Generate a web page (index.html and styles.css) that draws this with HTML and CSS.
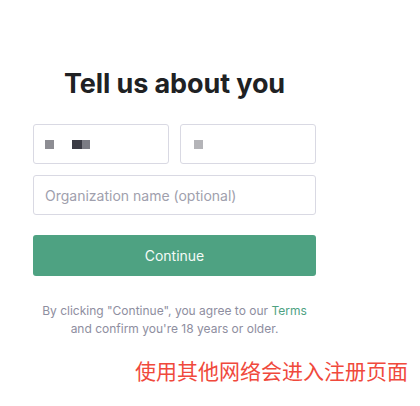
FILE: index.html
```html
<!DOCTYPE html>
<html>
<head>
<meta charset="utf-8">
<link rel="stylesheet" href="styles.css">
</head>
<body>
<main class="page">
  <section class="card">
    <h1 class="title">Tell us about you</h1>
    <div class="row">
      <div class="field">
        <span class="blot blot-light"></span>
        <span class="blot blot-dark"></span><span class="blot blot-mid"></span>
      </div>
      <div class="field">
        <span class="blot blot-faint"></span>
      </div>
    </div>
    <div class="field field-wide">
      <span class="placeholder">Organization name (optional)</span>
    </div>
    <button class="continue">Continue</button>
    <p class="legal">By clicking "Continue", you agree to our <span class="terms">Terms</span><br>and confirm you're 18 years or older.</p>
  </section>
  <p class="note">使用其他网络会进入注册页面</p>
</main>
</body>
</html>
```
FILE: styles.css
```css
html, body {
  margin: 0;
  padding: 0;
  background: #ffffff;
}
body {
  font-family: Inter, "Noto Sans", "Liberation Sans", sans-serif;
}
.page {
  width: 420px;
  height: 406px;
  overflow: hidden;
}
.card {
  width: 283px;
  margin-left: 33px;
  padding-top: 66px;
  display: flex;
  flex-direction: column;
}
.title {
  margin: 0 0 22px 0;
  text-align: center;
  font-size: 27px;
  line-height: 36px;
  font-weight: 700;
  color: #202123;
  letter-spacing: -0.1px;
}
.row {
  display: flex;
  gap: 11px;
  margin-bottom: 11px;
}
.field {
  box-sizing: border-box;
  flex: 1;
  height: 40px;
  border: 1px solid #d9d9e3;
  border-radius: 3px;
  display: flex;
  align-items: center;
  padding-left: 11px;
}
.field-wide {
  flex: none;
  width: 283px;
}
.blot {
  display: inline-block;
  height: 9px;
}
.blot-light {
  width: 9px;
  background: #8d8d93;
  margin-right: 18px;
}
.blot-dark {
  width: 10px;
  background: #3a3b44;
}
.blot-mid {
  width: 8px;
  background: #7b7c84;
}
.blot-faint {
  width: 9px;
  background: #b4b4b8;
  margin-left: 2px;
}
.placeholder {
  font-size: 14px;
  color: #a0a0ad;
}
.continue {
  margin-top: 20px;
  height: 41px;
  width: 283px;
  border: none;
  border-radius: 3px;
  background: #4ea282;
  color: #f4fbf7;
  font-family: inherit;
  font-size: 14px;
  padding: 0;
}
.legal {
  margin: 26px 0 0 0;
  text-align: center;
  font-size: 12px;
  line-height: 18px;
  color: #8e8ea0;
  white-space: nowrap;
}
.terms {
  color: #4ea282;
}
.note {
  margin: 19px 12px 0 0;
  text-align: right;
  font-family: "Noto Sans CJK SC", sans-serif;
  font-size: 21px;
  line-height: 26px;
  color: #f0493c;
}
```
